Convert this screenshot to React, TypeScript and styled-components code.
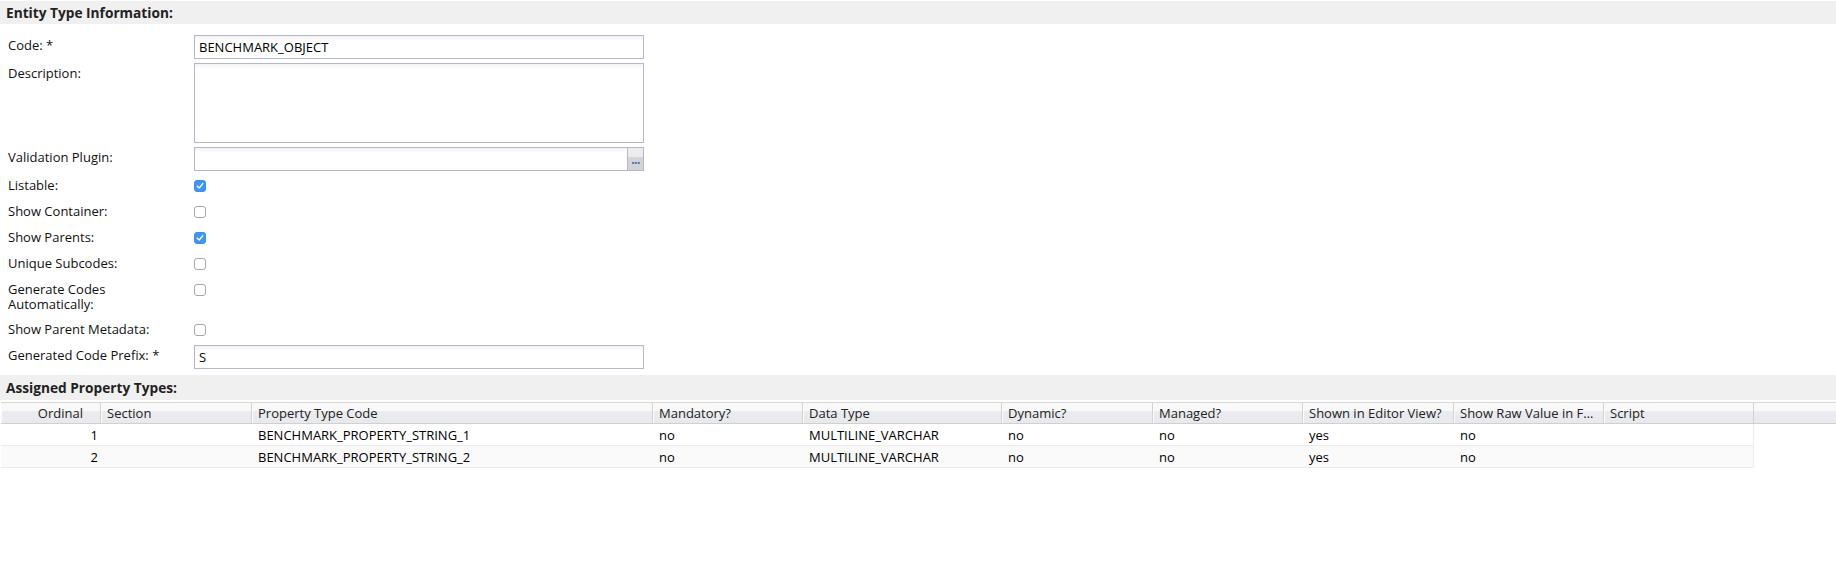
import styled, { createGlobalStyle } from 'styled-components';

const GlobalStyle = createGlobalStyle`
  html, body {
    margin: 0;
    padding: 0;
    background: #ffffff;
  }
  body {
    font-family: 'Open Sans', 'Liberation Sans', sans-serif;
    font-size: 13px;
    color: #111;
  }
`;

const Page = styled.div`
  width: 1836px;
  min-height: 567px;
  padding-top: 1px;
`;

const SectionBar = styled.div<{ $gap?: number; $h?: number }>`
  height: ${(p) => p.$h ?? 23}px;
  display: flex;
  align-items: center;
  padding-left: 6px;
  background: #f0f0f0;
  font-weight: 700;
  font-size: 13.7px;
  color: #222;
  margin-top: ${(p) => p.$gap ?? 0}px;
`;

const Form = styled.div`
  display: flex;
  flex-direction: column;
  gap: 4px;
  padding-top: 11px;
`;

const FieldRow = styled.div<{ $h?: number }>`
  display: grid;
  grid-template-columns: 194px 450px;
  min-height: ${(p) => p.$h ?? 22}px;
`;

const Label = styled.div`
  padding: 3px 0 0 8px;
  line-height: 15px;
  width: 160px;
`;

const TextInput = styled.div`
  box-sizing: border-box;
  height: 24px;
  border: 1px solid #b5b8c8;
  background: linear-gradient(#f2f2f2, #ffffff 5px);
  padding: 0 4px;
  display: flex;
  align-items: center;
  color: #000;
`;

const TextArea = styled(TextInput)`
  height: 80px;
  align-items: flex-start;
`;

const TriggerField = styled.div`
  box-sizing: border-box;
  height: 24px;
  border: 1px solid #b5b8c8;
  background: linear-gradient(#f2f2f2, #ffffff 5px);
  display: flex;
  justify-content: flex-end;
`;

const TriggerButton = styled.div`
  width: 16px;
  border-left: 1px solid #b5b8c8;
  background: linear-gradient(#ececec 0%, #ececec 40%, #d6d6d6 41%, #d3d3d3 100%);
  display: flex;
  align-items: flex-end;
  justify-content: center;
  padding-bottom: 4px;
  box-sizing: border-box;
`;

const Dots = styled.span`
  color: #3f63b3;
  font-size: 9px;
  line-height: 6px;
  letter-spacing: -0.5px;
`;

const CheckCell = styled.div`
  padding-top: 5px;
`;

const Box = styled.span<{ $checked: boolean }>`
  box-sizing: border-box;
  display: flex;
  align-items: center;
  justify-content: center;
  width: 12px;
  height: 12px;
  border-radius: 3px;
  border: 1px solid ${(p) => (p.$checked ? '#3a8ef0' : '#a9a9a9')};
  background: ${(p) => (p.$checked ? '#3d96f5' : '#ffffff')};
`;

const Table = styled.div`
  margin-top: 2px;
  margin-left: 1px;
`;

const HeaderRow = styled.div`
  display: flex;
  height: 22px;
  border-top: 1px solid #d6d6d6;
  border-bottom: 1px solid #d0d0d0;
  background: linear-gradient(#f9f9f9 0%, #f9f9f9 40%, #ebecef 41%, #e8e9ec 100%);
  box-sizing: border-box;
`;

const HeaderCell = styled.div<{ $w: number; $right?: boolean }>`
  width: ${(p) => p.$w}px;
  flex: none;
  box-sizing: border-box;
  display: flex;
  align-items: center;
  justify-content: ${(p) => (p.$right ? 'flex-end' : 'flex-start')};
  padding: ${(p) => (p.$right ? '0 17px 0 0' : '0 0 0 6px')};
  border-right: 1px solid #d2d2d2;
  box-shadow: inset 1px 0 0 #fcfcfc;
  color: #222;
  white-space: nowrap;
  overflow: hidden;
`;

const Filler = styled.div`
  flex: 1;
`;

const DataRow = styled.div<{ $alt: boolean }>`
  display: flex;
  width: 1753px;
  height: 22px;
  box-sizing: border-box;
  border-bottom: 1px solid #ececec;
  border-right: 1px solid #ececec;
  background: ${(p) => (p.$alt ? '#fafafa' : '#ffffff')};
`;

const Cell = styled.div<{ $w: number; $right?: boolean }>`
  width: ${(p) => p.$w}px;
  flex: none;
  box-sizing: border-box;
  display: flex;
  align-items: center;
  justify-content: ${(p) => (p.$right ? 'flex-end' : 'flex-start')};
  padding: ${(p) => (p.$right ? '0 3px 0 0' : '0 0 0 6px')};
  color: #000;
  white-space: nowrap;
`;

const columns = [
  { title: 'Ordinal', w: 100, right: true },
  { title: 'Section', w: 151 },
  { title: 'Property Type Code', w: 401 },
  { title: 'Mandatory?', w: 150 },
  { title: 'Data Type', w: 199 },
  { title: 'Dynamic?', w: 151 },
  { title: 'Managed?', w: 150 },
  { title: 'Shown in Editor View?', w: 151 },
  { title: 'Show Raw Value in F…', w: 150 },
  { title: 'Script', w: 150 },
];

const rows = [1, 2].map((n) => [
  String(n),
  '',
  `BENCHMARK_PROPERTY_STRING_${n}`,
  'no',
  'MULTILINE_VARCHAR',
  'no',
  'no',
  'yes',
  'no',
  '',
]);

function Check({ checked }: { checked: boolean }) {
  return (
    <CheckCell>
      <Box $checked={checked}>
        {checked && (
          <svg width="8" height="8" viewBox="0 0 8 8">
            <path d="M1.3 4.2 L3.2 6 L6.8 1.6" fill="none" stroke="#fff" strokeWidth="1.4" strokeLinecap="round" strokeLinejoin="round" />
          </svg>
        )}
      </Box>
    </CheckCell>
  );
}

const checks: [string, boolean, number?][] = [
  ['Listable:', true],
  ['Show Container:', false],
  ['Show Parents:', true],
  ['Unique Subcodes:', false],
  ['Generate Codes Automatically:', false, 36],
  ['Show Parent Metadata:', false],
];

export default function App() {
  return (
    <Page>
      <GlobalStyle />
      <SectionBar>Entity Type Information:</SectionBar>
      <Form>
        <FieldRow $h={24}>
          <Label>Code: *</Label>
          <TextInput>BENCHMARK_OBJECT</TextInput>
        </FieldRow>
        <FieldRow $h={80}>
          <Label>Description:</Label>
          <TextArea />
        </FieldRow>
        <FieldRow $h={24}>
          <Label>Validation Plugin:</Label>
          <TriggerField>
            <TriggerButton>
              <Dots>•••</Dots>
            </TriggerButton>
          </TriggerField>
        </FieldRow>
        {checks.map(([label, checked, h]) => (
          <FieldRow key={label} $h={h}>
            <Label>{label}</Label>
            <Check checked={checked} />
          </FieldRow>
        ))}
        <FieldRow $h={24}>
          <Label>Generated Code Prefix: *</Label>
          <TextInput>S</TextInput>
        </FieldRow>
      </Form>
      <SectionBar $gap={6} $h={25}>Assigned Property Types:</SectionBar>
      <Table>
        <HeaderRow>
          {columns.map((c) => (
            <HeaderCell key={c.title} $w={c.w} $right={c.right}>
              {c.title}
            </HeaderCell>
          ))}
          <Filler />
        </HeaderRow>
        {rows.map((r, i) => (
          <DataRow key={i} $alt={i % 2 === 1}>
            {r.map((v, j) => (
              <Cell key={j} $w={columns[j].w} $right={columns[j].right}>
                {v}
              </Cell>
            ))}
          </DataRow>
        ))}
      </Table>
    </Page>
  );
}
